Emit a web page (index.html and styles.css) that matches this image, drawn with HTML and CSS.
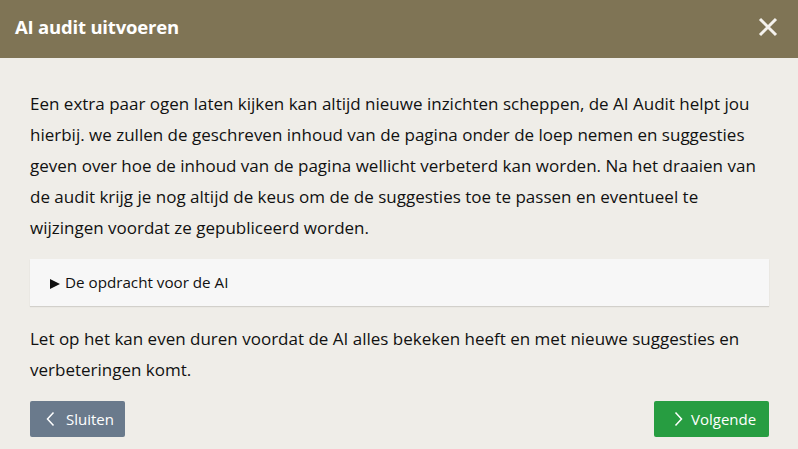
FILE: index.html
```html
<!DOCTYPE html>
<html lang="nl">
<head>
<meta charset="utf-8">
<title>AI audit uitvoeren</title>
<link rel="stylesheet" href="styles.css">
</head>
<body>
<div class="modal">
  <header class="modal-header">
    <h1 class="modal-title">AI audit uitvoeren</h1>
    <button class="close" aria-label="Sluiten">
      <svg width="20" height="20" viewBox="0 0 20 20"><path d="M2 2L18 18M18 2L2 18" stroke="#f4f2ee" stroke-width="3" fill="none"/></svg>
    </button>
  </header>
  <main class="modal-body">
    <p class="text">Een extra paar ogen laten kijken kan altijd nieuwe inzichten scheppen, de AI Audit helpt jou<br>hierbij. we zullen de geschreven inhoud van de pagina onder de loep nemen en suggesties<br>geven over hoe de inhoud van de pagina wellicht verbeterd kan worden. Na het draaien van<br>de audit krijg je nog altijd de keus om de de suggesties toe te passen en eventueel te<br>wijzingen voordat ze gepubliceerd worden.</p>
    <details class="prompt">
      <summary class="prompt-summary">De opdracht voor de AI</summary>
    </details>
    <p class="text">Let op het kan even duren voordat de AI alles bekeken heeft en met nieuwe suggesties en<br>verbeteringen komt.</p>
    <div class="actions">
      <button class="btn btn-close">
        <svg class="chev" width="9" height="16" viewBox="0 0 9 16"><path d="M7.5 1.5L1.5 8L7.5 14.5" stroke="#fff" stroke-width="1.5" fill="none"/></svg>
        <span>Sluiten</span>
      </button>
      <button class="btn btn-next">
        <svg class="chev" width="9" height="16" viewBox="0 0 9 16"><path d="M1.5 1.5L7.5 8L1.5 14.5" stroke="#fff" stroke-width="1.5" fill="none"/></svg>
        <span>Volgende</span>
      </button>
    </div>
  </main>
</div>
</body>
</html>
```
FILE: styles.css
```css
* { box-sizing: border-box; }
html, body { margin: 0; padding: 0; }
body {
  width: 798px;
  height: 449px;
  overflow: hidden;
  background: #efede8;
  font-family: "Open Sans", "Liberation Sans", sans-serif;
  color: #111;
}
.modal { display: flex; flex-direction: column; height: 449px; }
.modal-header {
  height: 58px;
  background: #7f7455;
  display: flex;
  align-items: center;
  justify-content: space-between;
  padding: 0 10px 6px 15px;
}
.modal-title {
  margin: 0;
  color: #fff;
  font-size: 18.5px;
  font-weight: 700;
  letter-spacing: -0.2px;
}
.close {
  background: none;
  border: 0;
  padding: 0;
  width: 20px;
  height: 20px;
  margin-right: 10px;
  margin-top: 2px;
  display: flex;
}
.modal-body {
  padding: 30px 29px 0 30px;
  display: flex;
  flex-direction: column;
}
.text {
  margin: 0;
  font-size: 17px;
  line-height: 31px;
  white-space: nowrap;
}
.prompt {
  margin: 16px 0 17px;
  background: #f7f7f7;
  box-shadow: 0 1px 1px rgba(0,0,0,0.12);
  height: 47px;
}
.prompt-summary {
  list-style: none;
  padding: 13px 20px;
  font-size: 15.2px;
  line-height: 21px;
  cursor: pointer;
}
.prompt-summary::-webkit-details-marker { display: none; }
.prompt-summary::before {
  content: "";
  display: inline-block;
  width: 0; height: 0;
  border-top: 5.5px solid transparent;
  border-bottom: 5.5px solid transparent;
  border-left: 10px solid #111;
  margin-right: 5px;
  vertical-align: -1px;
}
.actions {
  margin-top: 16px;
  display: flex;
  justify-content: space-between;
}
.btn {
  height: 36px;
  border: 0;
  border-radius: 2px;
  color: #fff;
  font-family: inherit;
  font-size: 15px;
  display: flex;
  align-items: center;
  padding: 0 0 0 16px;
}
.chev { flex: none; }
.btn-close { background: #6a7a8c; width: 95px; gap: 11px; }
.btn-next { background: #279d41; width: 115px; padding-left: 20px; gap: 8px; }
```
